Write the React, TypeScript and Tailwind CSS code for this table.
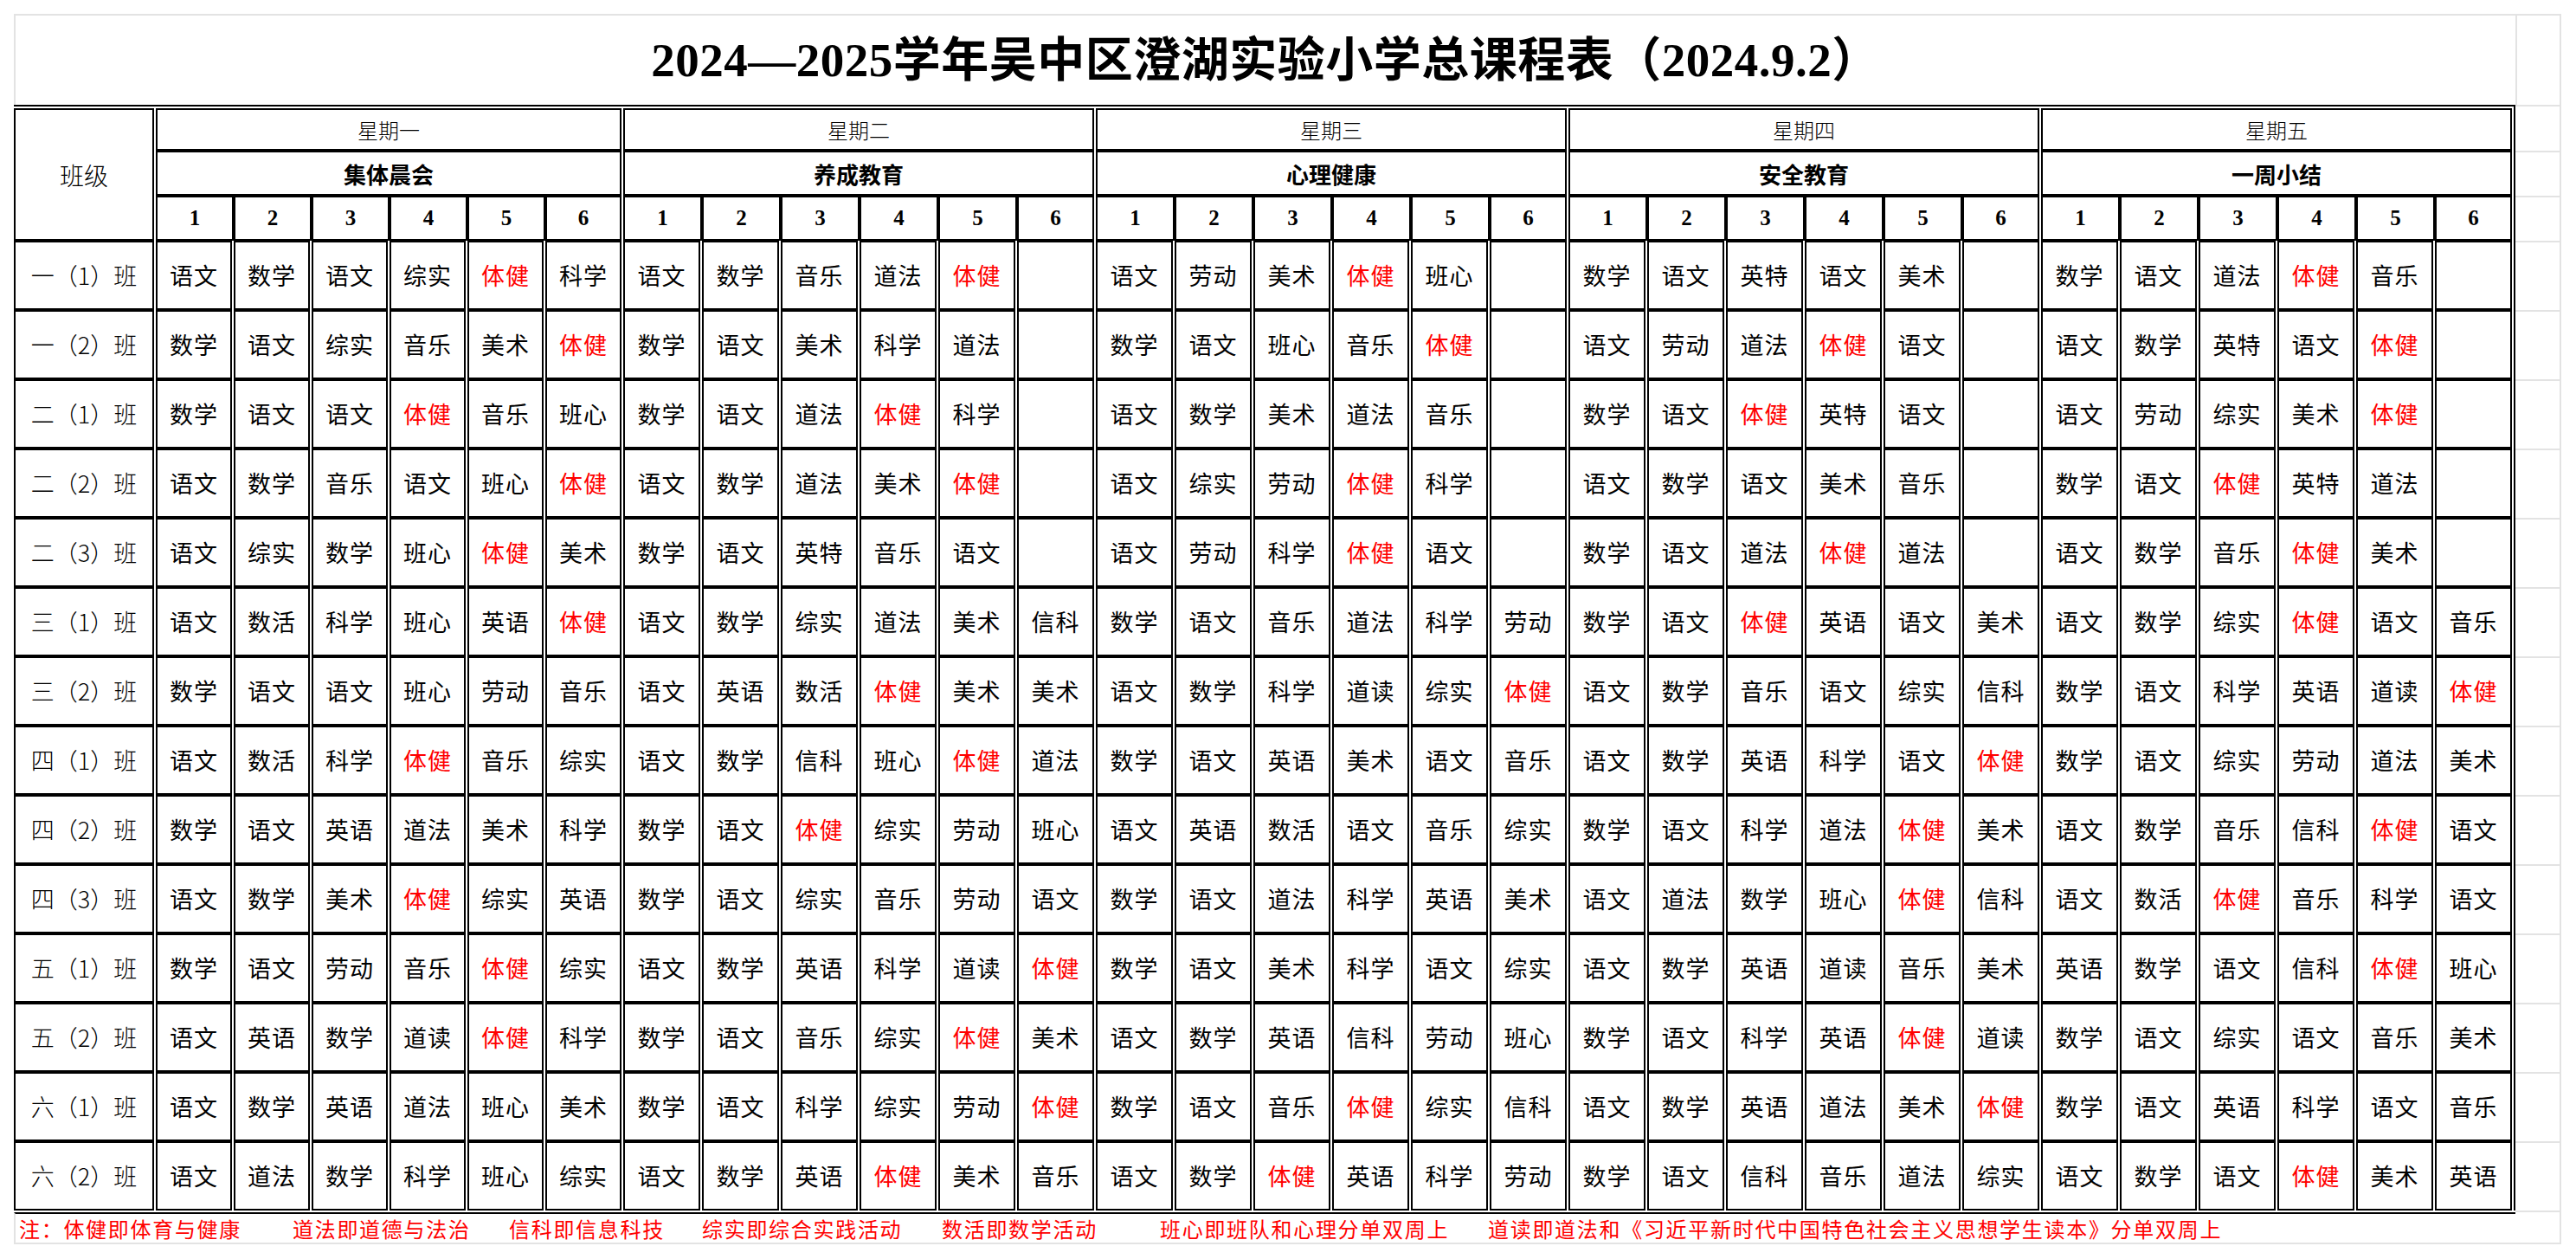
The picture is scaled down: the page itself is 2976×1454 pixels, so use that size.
import React from 'react';

const DAYS = [
  { name: '星期一', theme: '集体晨会' },
  { name: '星期二', theme: '养成教育' },
  { name: '星期三', theme: '心理健康' },
  { name: '星期四', theme: '安全教育' },
  { name: '星期五', theme: '一周小结' },
];

const RAW: [string, string][] = [
  ['一（1）班', '语文 数学 语文 综实 体健 科学 | 语文 数学 音乐 道法 体健 - | 语文 劳动 美术 体健 班心 - | 数学 语文 英特 语文 美术 - | 数学 语文 道法 体健 音乐 -'],
  ['一（2）班', '数学 语文 综实 音乐 美术 体健 | 数学 语文 美术 科学 道法 - | 数学 语文 班心 音乐 体健 - | 语文 劳动 道法 体健 语文 - | 语文 数学 英特 语文 体健 -'],
  ['二（1）班', '数学 语文 语文 体健 音乐 班心 | 数学 语文 道法 体健 科学 - | 语文 数学 美术 道法 音乐 - | 数学 语文 体健 英特 语文 - | 语文 劳动 综实 美术 体健 -'],
  ['二（2）班', '语文 数学 音乐 语文 班心 体健 | 语文 数学 道法 美术 体健 - | 语文 综实 劳动 体健 科学 - | 语文 数学 语文 美术 音乐 - | 数学 语文 体健 英特 道法 -'],
  ['二（3）班', '语文 综实 数学 班心 体健 美术 | 数学 语文 英特 音乐 语文 - | 语文 劳动 科学 体健 语文 - | 数学 语文 道法 体健 道法 - | 语文 数学 音乐 体健 美术 -'],
  ['三（1）班', '语文 数活 科学 班心 英语 体健 | 语文 数学 综实 道法 美术 信科 | 数学 语文 音乐 道法 科学 劳动 | 数学 语文 体健 英语 语文 美术 | 语文 数学 综实 体健 语文 音乐'],
  ['三（2）班', '数学 语文 语文 班心 劳动 音乐 | 语文 英语 数活 体健 美术 美术 | 语文 数学 科学 道读 综实 体健 | 语文 数学 音乐 语文 综实 信科 | 数学 语文 科学 英语 道读 体健'],
  ['四（1）班', '语文 数活 科学 体健 音乐 综实 | 语文 数学 信科 班心 体健 道法 | 数学 语文 英语 美术 语文 音乐 | 语文 数学 英语 科学 语文 体健 | 数学 语文 综实 劳动 道法 美术'],
  ['四（2）班', '数学 语文 英语 道法 美术 科学 | 数学 语文 体健 综实 劳动 班心 | 语文 英语 数活 语文 音乐 综实 | 数学 语文 科学 道法 体健 美术 | 语文 数学 音乐 信科 体健 语文'],
  ['四（3）班', '语文 数学 美术 体健 综实 英语 | 数学 语文 综实 音乐 劳动 语文 | 数学 语文 道法 科学 英语 美术 | 语文 道法 数学 班心 体健 信科 | 语文 数活 体健 音乐 科学 语文'],
  ['五（1）班', '数学 语文 劳动 音乐 体健 综实 | 语文 数学 英语 科学 道读 体健 | 数学 语文 美术 科学 语文 综实 | 语文 数学 英语 道读 音乐 美术 | 英语 数学 语文 信科 体健 班心'],
  ['五（2）班', '语文 英语 数学 道读 体健 科学 | 数学 语文 音乐 综实 体健 美术 | 语文 数学 英语 信科 劳动 班心 | 数学 语文 科学 英语 体健 道读 | 数学 语文 综实 语文 音乐 美术'],
  ['六（1）班', '语文 数学 英语 道法 班心 美术 | 数学 语文 科学 综实 劳动 体健 | 数学 语文 音乐 体健 综实 信科 | 语文 数学 英语 道法 美术 体健 | 数学 语文 英语 科学 语文 音乐'],
  ['六（2）班', '语文 道法 数学 科学 班心 综实 | 语文 数学 英语 体健 美术 音乐 | 语文 数学 体健 英语 科学 劳动 | 数学 语文 信科 音乐 道法 综实 | 语文 数学 语文 体健 美术 英语'],
];

const ROWS = RAW.map(([cls, s]) => ({
  cls,
  cells: s
    .split(/\s+/)
    .filter((t) => t && t !== '|')
    .map((t) => (t === '-' ? '' : t)),
}));

const FOOTER = [
  { text: '注：体健即体育与健康', w: 'w-[316px]' },
  { text: '道法即道德与法治', w: 'w-[250px]' },
  { text: '信科即信息科技', w: 'w-[223px]' },
  { text: '综实即综合实践活动', w: 'w-[277px]' },
  { text: '数活即数学活动', w: 'w-[252px]' },
  { text: '班心即班队和心理分单双周上', w: 'w-[379px]' },
  { text: '道读即道法和《习近平新时代中国特色社会主义思想学生读本》分单双周上', w: '' },
];

const cellBase = 'border-2 border-black flex items-center justify-center min-w-0';

export default function App() {
  return (
    <div className="w-[2976px] h-[1454px] bg-white overflow-hidden pt-[16px] pl-[16px] flex font-['Noto_Sans_CJK_SC',sans-serif] text-black">
      {/* main sheet column */}
      <div className="w-[2890px] shrink-0 flex flex-col">
        {/* title */}
        <div className="h-[105px] border-t-2 border-l-2 border-[#e3e3e3] flex items-center justify-center">
          <span className="font-['Liberation_Serif','Noto_Sans_CJK_SC',serif] font-bold text-[55px] leading-none tracking-[0.5px]">
            2024—2025学年吴中区澄湖实验小学总课程表（2024.9.2）
          </span>
        </div>

        {/* table */}
        <div className="border-t-2 border-r-2 border-black pt-[2px] pr-[2px]">
          <div className="grid grid-cols-[162px_repeat(6,88px)_repeat(24,89px)] grid-rows-[49px_52px_52px_repeat(14,80px)] gap-x-[2px]">
            <div className={`${cellBase} row-span-3 text-[28px] font-light`}>班级</div>
            {DAYS.map((d) => (
              <div key={d.name} className={`${cellBase} col-span-6 text-[24px] font-light`}>
                {d.name}
              </div>
            ))}
            {DAYS.map((d) => (
              <div key={d.theme} className={`${cellBase} col-span-6 text-[26px] font-bold`}>
                {d.theme}
              </div>
            ))}
            {DAYS.map((d) =>
              [1, 2, 3, 4, 5, 6].map((n) => (
                <div
                  key={d.name + n}
                  className={`${cellBase} ${n < 6 ? '-mr-[2px]' : ''} font-['Liberation_Serif',serif] font-bold text-[25px]`}
                >
                  {n}
                </div>
              ))
            )}
            {ROWS.map((r) => (
              <React.Fragment key={r.cls}>
                <div className={`${cellBase} text-[27px] font-light`}>{r.cls}</div>
                {r.cells.map((c, i) => (
                  <div
                    key={i}
                    className={`${cellBase} text-[27px] tracking-[1px] ${c === '体健' ? 'text-[#ff0000]' : 'text-black'}`}
                  >
                    {c}
                  </div>
                ))}
              </React.Fragment>
            ))}
          </div>
        </div>

        {/* footer note */}
        <div className="mt-[2px] h-[37px] border-t-2 border-black border-l-2 border-l-[#e3e3e3] border-b-2 border-b-[#e3e3e3] flex items-center pl-[4px] text-[#ff0000] text-[24px] tracking-[1.7px] leading-none whitespace-nowrap">
          {FOOTER.map((f) => (
            <span key={f.text} className={`${f.w} shrink-0`}>
              {f.text}
            </span>
          ))}
        </div>
      </div>

      {/* extra spreadsheet column */}
      <div className="w-[53px] shrink-0 flex flex-col">
        <div className="h-[107px] border-t-2 border-b-2 border-l-2 border-r-2 border-[#e3e3e3]" />
        <div className="h-[53px] border-b-2 border-r-2 border-[#e3e3e3]" />
        <div className="h-[52px] border-b-2 border-r-2 border-[#e3e3e3]" />
        <div className="h-[52px] border-b-2 border-r-2 border-[#e3e3e3]" />
        {ROWS.map((r) => (
          <div key={r.cls} className="h-[80px] border-b-2 border-r-2 border-[#e3e3e3]" />
        ))}
        <div className="h-[37px] border-b-2 border-r-2 border-[#e3e3e3]" />
      </div>
    </div>
  );
}
